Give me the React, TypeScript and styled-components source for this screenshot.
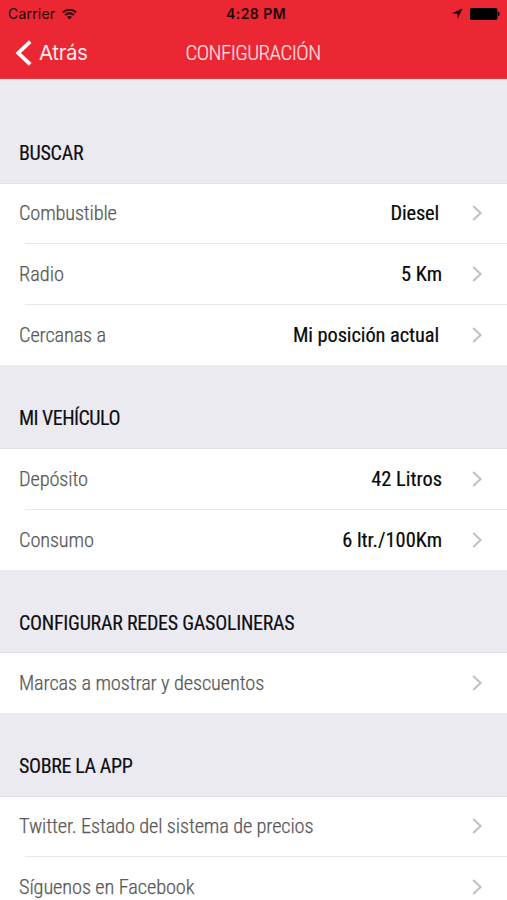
import React from "react";
import styled, { createGlobalStyle } from "styled-components";

const GlobalStyle = createGlobalStyle`
  * { box-sizing: border-box; }
  body { margin: 0; background: #ebeaf1; overflow: hidden; }
`;

const Screen = styled.main`
  height: 900px;
  overflow: hidden;
  display: flex;
  flex-direction: column;
  background: #ebeaf1;
  font-family: "Roboto Condensed", Roboto, sans-serif;
  font-size: 20px;
  line-height: 24px;
`;

const Header = styled.header`
  flex: none;
  height: 79px;
  background: #ea2733;
  border-bottom: 1px solid #ea3743;
`;

const StatusBar = styled.div`
  height: 27px;
  padding: 0 7px 0 8px;
  display: grid;
  grid-template-columns: 1fr auto 1fr;
  align-items: center;
  font-family: Inter, sans-serif;
  font-size: 14px;
  line-height: 27px;
  color: #24060a;
`;

const Carrier = styled.div`
  display: flex;
  align-items: center;
  gap: 7px;
  letter-spacing: 0.2px;
`;

const Clock = styled.time`
  padding-left: 4px;
  font-weight: 600;
  letter-spacing: 0.45px;
`;

const StatusIcons = styled.div`
  display: flex;
  justify-content: flex-end;
  align-items: center;
  gap: 7px;
`;

const NavBar = styled.nav`
  height: 51px;
  padding: 0 15px;
  display: grid;
  grid-template-columns: 1fr auto 1fr;
  align-items: center;
  color: #fff;
`;

const BackButton = styled.button`
  padding: 0;
  border: 0;
  background: none;
  display: flex;
  align-items: center;
  gap: 7px;
  color: #ffeaec;
  font: 400 20.5px/26px Inter, sans-serif;
  letter-spacing: -0.4px;
`;

const Title = styled.h1`
  margin: 0 1px 0 0;
  font-size: 21px;
  font-weight: 300;
  line-height: 26px;
  letter-spacing: -0.55px;
  color: #ffe0e3;
  -webkit-text-stroke: 0.15px currentColor;
`;

const Section = styled.section<{ $headingHeight: number }>`
  flex: none;
  display: grid;
  grid-template-rows: ${(p) => p.$headingHeight}px auto;
`;

const Heading = styled.h2<{ $spacing: number; $bottom: number }>`
  margin: 0;
  padding: 0 19px ${(p) => p.$bottom}px;
  align-self: end;
  font-size: 20px;
  font-weight: 400;
  line-height: 24px;
  letter-spacing: ${(p) => p.$spacing}px;
  color: #0e0e12;
  -webkit-text-stroke: 0.15px currentColor;
`;

const Rows = styled.div`
  background: #fff;
  border-top: 1px solid #e1e0e6;
`;

const Row = styled.div<{ $height: number }>`
  height: ${(p) => p.$height}px;
  padding: 0 24px 2px 19px;
  display: flex;
  align-items: center;
  background: linear-gradient(#e9e9ec, #e9e9ec) 25px 100% / 100% 1px no-repeat;

  &:last-child {
    padding-bottom: 0;
    background: none;
  }
`;

const Label = styled.span<{ $spacing: number }>`
  flex: 1;
  font-size: 20.4px;
  font-weight: 300;
  letter-spacing: ${(p) => p.$spacing}px;
  color: #5a5a5a;
  -webkit-text-stroke: 0.25px currentColor;
`;

const Value = styled.span<{ $inset: number; $spacing: number }>`
  margin-right: ${(p) => p.$inset}px;
  font-weight: 400;
  font-size: 20.4px;
  letter-spacing: ${(p) => p.$spacing}px;
  color: #080808;
  -webkit-text-stroke: 0.2px currentColor;
`;

const Wifi = () => (
  <svg width="15" height="12" viewBox="0 0 15 12" fill="none" stroke="currentColor" strokeWidth="2">
    <path d="M.8 4.4C4.6.7 10.4.7 14.2 4.4M3.1 7.1c2.5-2.4 6.3-2.4 8.8 0" />
    <path d="M7.5 11.5 5 9c1.4-1.3 3.6-1.3 5 0Z" fill="currentColor" stroke="none" />
  </svg>
);

const Location = () => (
  <svg width="11" height="11" viewBox="0 0 11 11" fill="currentColor">
    <path d="M10.5.4 0 5.2l5.3.5.5 5.1Z" />
  </svg>
);

const Battery = () => (
  <svg width="30" height="12" viewBox="0 0 30 12" fill="#000">
    <rect width="27.4" height="12" rx="1.8" />
    <path d="M28 3.8c2.2.4 2.2 4 0 4.4Z" />
  </svg>
);

const BackArrow = () => (
  <svg width="17" height="26" viewBox="0 0 17 26" fill="none" stroke="#fff" strokeWidth="3.8">
    <path d="M15.2 1.6 3.3 13l11.9 11.4" />
  </svg>
);

const Chevron = () => (
  <svg width="11" height="16" viewBox="0 0 11 16" fill="none" stroke="#c2c2c5" strokeWidth="2.1">
    <path d="m1.2 1 7.4 7-7.4 7" />
  </svg>
);

type Item = { label: string; value?: string; height: number; inset?: number; ls?: number; vs?: number };
type Group = { title: string; headingHeight: number; ls: number; bottom?: number; items: Item[] };

const groups: Group[] = [
  {
    title: "BUSCAR",
    headingHeight: 104,
    ls: -0.3,
    items: [
      { label: "Combustible", value: "Diesel", height: 60, inset: 33, ls: -0.18, vs: -0.15 },
      { label: "Radio", value: "5 Km", height: 61, inset: 30, ls: 0 },
      { label: "Cercanas a", value: "Mi posición actual", height: 60, inset: 33, vs: -0.08 },
    ],
  },
  {
    title: "MI VEHÍCULO",
    headingHeight: 83,
    ls: -0.53,
    items: [
      { label: "Depósito", value: "42 Litros", height: 61, inset: 30 },
      { label: "Consumo", value: "6 ltr./100Km", height: 60, inset: 30 },
    ],
  },
  {
    title: "CONFIGURAR REDES GASOLINERAS",
    headingHeight: 82,
    ls: -0.26,
    bottom: 17,
    items: [{ label: "Marcas a mostrar y descuentos", height: 60, ls: -0.13 }],
  },
  {
    title: "SOBRE LA APP",
    headingHeight: 83,
    ls: -0.38,
    items: [
      { label: "Twitter. Estado del sistema de precios", height: 60, ls: -0.15 },
      { label: "Síguenos en Facebook", height: 59, ls: -0.12 },
    ],
  },
];

export default function App() {
  return (
    <>
      <GlobalStyle />
      <Screen>
        <Header>
          <StatusBar>
            <Carrier>Carrier <Wifi /></Carrier>
            <Clock>4:28 PM</Clock>
            <StatusIcons><Location /><Battery /></StatusIcons>
          </StatusBar>
          <NavBar>
            <BackButton><BackArrow />Atrás</BackButton>
            <Title>CONFIGURACIÓN</Title>
          </NavBar>
        </Header>
        {groups.map((g) => (
          <Section key={g.title} $headingHeight={g.headingHeight}>
            <Heading $spacing={g.ls} $bottom={g.bottom ?? 18}>{g.title}</Heading>
            <Rows>
              {g.items.map((it) => (
                <Row key={it.label} $height={it.height}>
                  <Label $spacing={it.ls ?? -0.15}>{it.label}</Label>
                  {it.value && <Value $inset={it.inset ?? 31} $spacing={it.vs ?? 0}>{it.value}</Value>}
                  <Chevron />
                </Row>
              ))}
            </Rows>
          </Section>
        ))}
      </Screen>
    </>
  );
}
